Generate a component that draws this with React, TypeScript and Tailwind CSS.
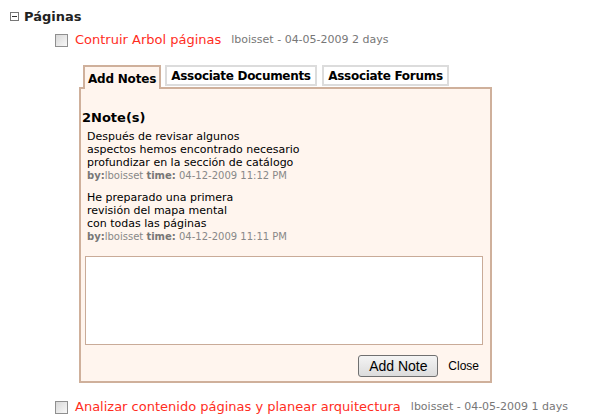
import React from 'react';

const verdana = { fontFamily: '"DejaVu Sans", Verdana, sans-serif' };
const arial = { fontFamily: '"Liberation Sans", Arial, sans-serif' };

const Checkbox = () => (
  <span className="inline-block w-[13px] h-[13px] border border-[#8f8f8f] bg-gradient-to-br from-[#d8d8d8] to-[#f8f8f8] shrink-0" />
);

const TaskRow = ({ title, meta }: { title: string; meta: string }) => (
  <div className="flex items-center h-[16px] pl-[55px]">
    <Checkbox />
    <span className="ml-[7px] text-[13px] text-[#ff2d1e] whitespace-nowrap">{title}</span>
    <span className="ml-[10px] text-[11px] text-[#777] whitespace-nowrap">{meta}</span>
  </div>
);

const notes = [
  {
    lines: ['Después de revisar algunos', 'aspectos hemos encontrado necesario', 'profundizar en la sección de catálogo'],
    time: '04-12-2009 11:12 PM',
  },
  {
    lines: ['He preparado una primera', 'revisión del mapa mental', 'con todas las páginas'],
    time: '04-12-2009 11:11 PM',
  },
];

export default function App() {
  return (
    <div className="w-[589px] h-[419px] bg-white overflow-hidden text-[#222]" style={verdana}>
      {/* section header */}
      <div className="flex items-center pt-[8px] pl-[10px] h-[25px]">
        <span className="relative w-[9px] h-[9px] border border-[#777] bg-white">
          <span className="absolute left-[1px] top-[3px] w-[5px] h-[1px] bg-[#333]" />
        </span>
        <span className="ml-[5px] text-[13px] font-bold text-[#222]">Páginas</span>
      </div>

      <div className="mt-[7px]">
        <TaskRow title="Contruir Arbol páginas" meta="lboisset - 04-05-2009 2 days" />
      </div>

      {/* tabs */}
      <div className="ml-[79px] mt-[17px] w-[413px]">
        <div className="flex items-start pl-[4px] h-[22px] relative z-10 whitespace-nowrap">
          <div className="w-[78px] h-[24px] shrink-0 pt-[3px] text-center border-2 border-b-0 border-[#cfb09b] bg-[#fff5ee] text-[12px] font-bold text-black tracking-[-0.2px]">
            Add Notes
          </div>
          <div className="ml-[4px] w-[152px] h-[21px] shrink-0 text-center border-2 border-[#dcdcdc] bg-white text-[12px] font-bold text-black leading-[19px] tracking-[-0.3px]">
            Associate Documents
          </div>
          <div className="ml-[5px] w-[127px] h-[21px] shrink-0 text-center border-2 border-[#dcdcdc] bg-white text-[12px] font-bold text-black leading-[19px] tracking-[-0.3px]">
            Associate Forums
          </div>
        </div>

        <div className="border-2 border-[#cfb09b] bg-[#fff5ee] h-[296px]">
          <div className="pt-[21px] pl-[1px] text-[13px] font-bold text-black leading-[16px]">2Note(s)</div>
          <div className="pl-[6px] mt-[4px]">
            {notes.map((n, i) => (
              <div key={i} className={i > 0 ? 'mt-[9px]' : ''}>
                {n.lines.map((l) => (
                  <div key={l} className="text-[11px] leading-[13px] text-black">{l}</div>
                ))}
                <div className="text-[10px] leading-[13px] text-[#888]">
                  <b className="text-[#777]">by:</b>lboisset <b className="text-[#777]">time:</b> {n.time}
                </div>
              </div>
            ))}
          </div>
          <textarea className="block mt-[13px] w-[398px] h-[89px] ml-[4px] border border-[#c9ab98] bg-white resize-none outline-none" />
          <div className="flex items-center justify-end mt-[10px] pr-[11px]">
            <button
              className="h-[22px] w-[80px] rounded-[3px] border border-[#707070] bg-gradient-to-b from-[#f4f4f4] to-[#dcdcdc] text-[14px] text-black"
              style={arial}
            >
              Add Note
            </button>
            <span className="ml-[10px] text-[12px] text-black" style={arial}>
              Close
            </span>
          </div>
        </div>
      </div>

      <div className="mt-[16px]">
        <TaskRow title="Analizar contenido páginas y planear arquitectura" meta="lboisset - 04-05-2009 1 days" />
      </div>
    </div>
  );
}
